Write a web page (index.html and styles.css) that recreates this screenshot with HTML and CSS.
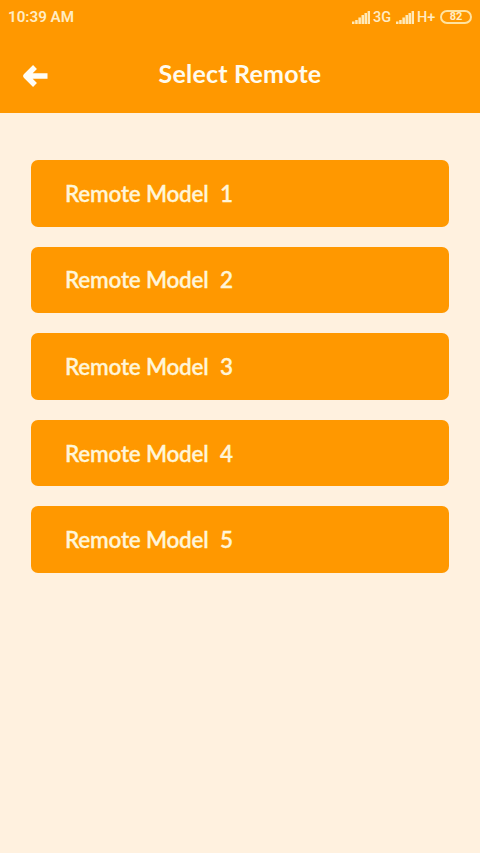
FILE: index.html
```html
<!DOCTYPE html>
<html lang="en">
<head>
<meta charset="utf-8">
<title>Select Remote</title>
<link rel="stylesheet" href="styles.css">
</head>
<body>
<header class="header">
  <div class="status">
    <span class="time">10:39 AM</span>
    <div class="indicators">
      <svg class="signal" viewBox="0 0 18 13"><path d="M0 10.500h2.500V13H0zM3.200 9h2.500v4H3.200zM6.400 6.500h2.500V13H6.400zM9.500 4h2.500v9H9.500zM12.500 2h2.500v11h-2.500zM15.600 0H18v13h-2.400z"/></svg>
      <span class="network">3G</span>
      <svg class="signal" viewBox="0 0 18 13"><path d="M0 10.500h2.500V13H0zM3.200 9h2.500v4H3.200zM6.400 6.500h2.500V13H6.400zM9.500 4h2.500v9H9.500zM12.500 2h2.500v11h-2.500zM15.600 0H18v13h-2.400z"/></svg>
      <span class="network network-h">H+</span>
      <span class="battery"><span class="level">82</span></span>
    </div>
  </div>
  <div class="toolbar">
    <svg class="back" viewBox="0 0 26 24"><path d="M13 3 4 12l9 9M5 12H25.500"/></svg>
    <h1 class="title">Select Remote</h1>
  </div>
</header>
<main class="list">
  <div class="item"><span class="name">Remote Model</span><span class="number">1</span></div>
  <div class="item"><span class="name">Remote Model</span><span class="number">2</span></div>
  <div class="item"><span class="name">Remote Model</span><span class="number">3</span></div>
  <div class="item"><span class="name">Remote Model</span><span class="number">4</span></div>
  <div class="item"><span class="name">Remote Model</span><span class="number">5</span></div>
</main>
</body>
</html>
```
FILE: styles.css
```css
* { box-sizing: border-box; }
body {
  margin: 0;
  min-height: 853px;
  background: #fff1df;
  font-family: Lato, "Liberation Sans", sans-serif;
}
.header {
  height: 113px;
  background: #ff9800;
  color: #fffbee;
}
.status {
  height: 34px;
  padding: 0 8px;
  display: flex;
  align-items: center;
  justify-content: space-between;
  font-family: Roboto, sans-serif;
  font-weight: 600;
  color: #ffecc4;
}
.time { font-size: 15.200px; }
.indicators { display: flex; align-items: center; }
.signal { width: 18px; height: 13px; fill: #ffe9b8; }
.network {
  width: 19px;
  margin: 0 4px 0 3px;
  font-size: 14.500px;
  font-weight: 500;
  white-space: nowrap;
}
.battery {
  width: 32px;
  height: 14px;
  border: 2px solid #ffe3a0;
  border-radius: 7px;
  display: flex;
  align-items: center;
  justify-content: center;
}
.level {
  font-size: 11px;
  font-weight: 700;
  line-height: 10px;
}
.toolbar {
  height: 78px;
  padding: 0 22px;
  display: grid;
  grid-template-columns: 26px 1fr 26px;
  align-items: center;
}
.back {
  width: 26px;
  height: 24px;
  margin-top: 5px;
  fill: none;
  stroke: #fffdf5;
  stroke-width: 5.500;
  stroke-linejoin: round;
}
.title {
  margin: 0;
  font-size: 25px;
  font-weight: 700;
  line-height: 30px;
  text-align: center;
  letter-spacing: 0.200px;
}
.list {
  padding: 47px 31px 0;
  display: flex;
  flex-direction: column;
  gap: 20px;
}
.item {
  height: 66.600px;
  padding-left: 34px;
  border-radius: 7px;
  background: #ff9800;
  color: #fff5d8;
  font-size: 22.500px;
  font-weight: 600;
  -webkit-text-stroke: 0.300px #fff5d8;
  display: flex;
  align-items: center;
}
.name {
  width: 155px;
  letter-spacing: -0.220px;
  white-space: nowrap;
}
```
